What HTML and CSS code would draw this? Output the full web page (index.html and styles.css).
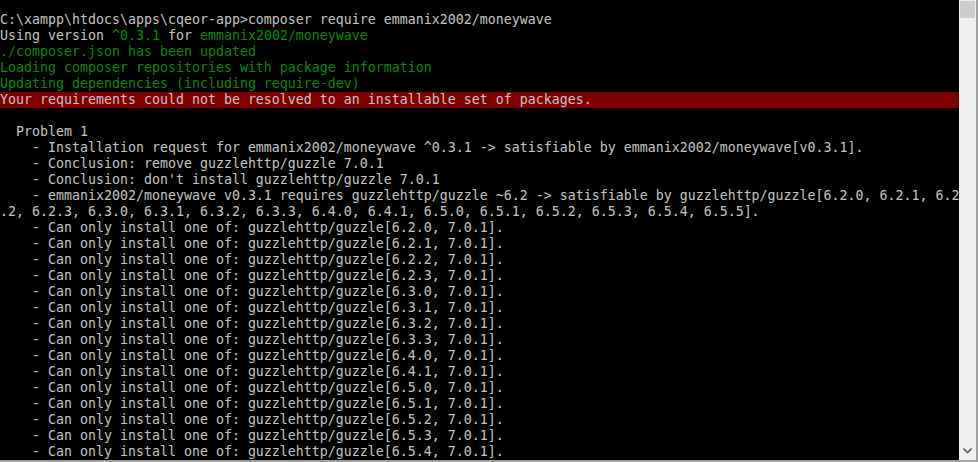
FILE: index.html
```html
<!DOCTYPE html>
<html>
<head>
<meta charset="utf-8">
<link rel="stylesheet" href="styles.css">
</head>
<body>
<div class="window">
  <div class="console">
    <div class="ln">C:\xampp\htdocs\apps\cqeor-app&gt;composer require emmanix2002/moneywave</div>
    <div class="ln">Using version <span class="g">^0.3.1</span> for <span class="g">emmanix2002/moneywave</span></div>
    <div class="ln g">./composer.json has been updated</div>
    <div class="ln g">Loading composer repositories with package information</div>
    <div class="ln g">Updating dependencies (including require-dev)</div>
    <div class="ln err">Your requirements could not be resolved to an installable set of packages.</div>
    <div class="ln"> </div>
    <div class="ln">  Problem 1</div>
    <div class="ln">    - Installation request for emmanix2002/moneywave ^0.3.1 -&gt; satisfiable by emmanix2002/moneywave[v0.3.1].</div>
    <div class="ln">    - Conclusion: remove guzzlehttp/guzzle 7.0.1</div>
    <div class="ln">    - Conclusion: don't install guzzlehttp/guzzle 7.0.1</div>
    <div class="ln">    - emmanix2002/moneywave v0.3.1 requires guzzlehttp/guzzle ~6.2 -&gt; satisfiable by guzzlehttp/guzzle[6.2.0, 6.2.1, 6.2</div>
    <div class="ln">.2, 6.2.3, 6.3.0, 6.3.1, 6.3.2, 6.3.3, 6.4.0, 6.4.1, 6.5.0, 6.5.1, 6.5.2, 6.5.3, 6.5.4, 6.5.5].</div>
    <div class="ln">    - Can only install one of: guzzlehttp/guzzle[6.2.0, 7.0.1].</div>
    <div class="ln">    - Can only install one of: guzzlehttp/guzzle[6.2.1, 7.0.1].</div>
    <div class="ln">    - Can only install one of: guzzlehttp/guzzle[6.2.2, 7.0.1].</div>
    <div class="ln">    - Can only install one of: guzzlehttp/guzzle[6.2.3, 7.0.1].</div>
    <div class="ln">    - Can only install one of: guzzlehttp/guzzle[6.3.0, 7.0.1].</div>
    <div class="ln">    - Can only install one of: guzzlehttp/guzzle[6.3.1, 7.0.1].</div>
    <div class="ln">    - Can only install one of: guzzlehttp/guzzle[6.3.2, 7.0.1].</div>
    <div class="ln">    - Can only install one of: guzzlehttp/guzzle[6.3.3, 7.0.1].</div>
    <div class="ln">    - Can only install one of: guzzlehttp/guzzle[6.4.0, 7.0.1].</div>
    <div class="ln">    - Can only install one of: guzzlehttp/guzzle[6.4.1, 7.0.1].</div>
    <div class="ln">    - Can only install one of: guzzlehttp/guzzle[6.5.0, 7.0.1].</div>
    <div class="ln">    - Can only install one of: guzzlehttp/guzzle[6.5.1, 7.0.1].</div>
    <div class="ln">    - Can only install one of: guzzlehttp/guzzle[6.5.2, 7.0.1].</div>
    <div class="ln">    - Can only install one of: guzzlehttp/guzzle[6.5.3, 7.0.1].</div>
    <div class="ln">    - Can only install one of: guzzlehttp/guzzle[6.5.4, 7.0.1].</div>
  </div>
  <div class="scrollbar">
    <div class="thumb"></div>
    <svg class="arrow" width="9" height="6" viewBox="0 0 9 6"><path d="M0.5 0.5 L4.5 4.5 L8.5 0.5" fill="none" stroke="#606060" stroke-width="1.6"/></svg>
  </div>
  <div class="edge"></div>
</div>
</body>
</html>
```
FILE: styles.css
```css
html, body {
  margin: 0;
  padding: 0;
  background: #000;
}
.window {
  display: flex;
  box-sizing: border-box;
  width: 978px;
  height: 462px;
  overflow: hidden;
  background: #000;
  border-bottom: 2px solid #a0a0a0;
}
.console {
  width: 959px;
  flex: none;
  padding-top: 12px;
  overflow: hidden;
  font-family: "DejaVu Sans Mono", "Liberation Mono", monospace;
  font-size: 13.29px;
  line-height: 16px;
  color: #c4c4c4;
}
.ln {
  white-space: pre;
  height: 16px;
}
.g {
  color: #0a8a0a;
}
.err {
  background: #800000;
  color: #c4c4c4;
  width: 959px;
}
.scrollbar {
  width: 17px;
  flex: none;
  background: #f0f0f0;
  display: flex;
  flex-direction: column;
  align-items: center;
}
.thumb {
  width: 15px;
  height: 17px;
  margin-top: 1px;
  background: #cdcdcd;
}
.arrow {
  margin-top: auto;
  margin-bottom: 6px;
}
.edge {
  width: 2px;
  flex: none;
  background: #a0a0a0;
}
```
